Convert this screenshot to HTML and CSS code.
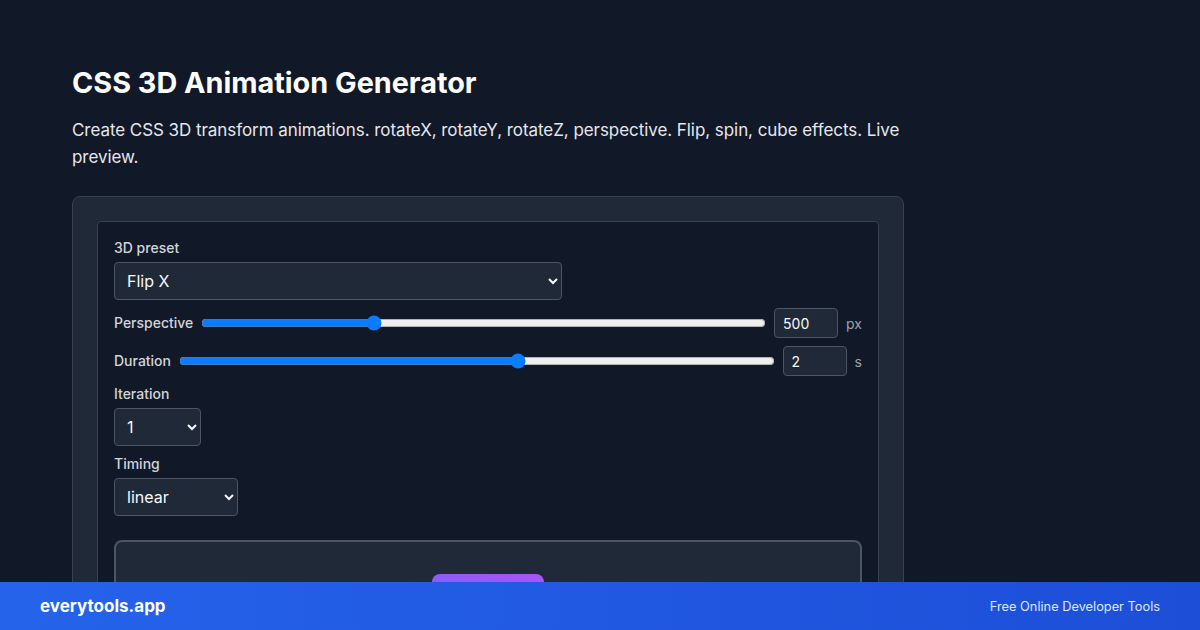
FILE: index.html
```html
<!DOCTYPE html>
<html lang="en">
<head>
<meta charset="utf-8">
<title>CSS 3D Animation Generator</title>
<link rel="stylesheet" href="styles.css">
</head>
<body>
<main class="page">
  <h1 class="title">CSS 3D Animation Generator</h1>
  <p class="lead">Create CSS 3D transform animations. rotateX, rotateY, rotateZ, perspective. Flip, spin, cube effects. Live preview.</p>
  <section class="card">
    <div class="panel">
      <label class="label">3D preset</label>
      <select class="select select-wide">
        <option>Flip X</option>
      </select>
      <div class="row">
        <span class="row-label">Perspective</span>
        <input class="range" type="range" min="200" max="1200" value="500">
        <input class="num" type="text" value="500">
        <span class="unit">px</span>
      </div>
      <div class="row">
        <span class="row-label">Duration</span>
        <input class="range" type="range" min="0" max="3.5" step="0.1" value="2">
        <input class="num" type="text" value="2">
        <span class="unit">s</span>
      </div>
      <label class="label label-gap">Iteration</label>
      <select class="select select-iter">
        <option>1</option>
      </select>
      <label class="label label-gap">Timing</label>
      <select class="select select-timing">
        <option>linear</option>
      </select>
      <div class="preview">
        <div class="box"></div>
      </div>
    </div>
  </section>
</main>
<footer class="footer">
  <span class="brand">everytools.app</span>
  <span class="tagline">Free Online Developer Tools</span>
</footer>
</body>
</html>
```

FILE: styles.css
```css
* { box-sizing: border-box; }
html, body { margin: 0; padding: 0; }
body {
  background: #111827;
  color: #f9fafb;
  font-family: Inter, "Noto Sans", "Liberation Sans", sans-serif;
  height: 630px;
  overflow: hidden;
}
.page {
  width: 832px;
  margin-left: 72px;
  padding-top: 65px;
}
.title {
  margin: 0;
  font-size: 28.8px;
  line-height: 36px;
  font-weight: 700;
  color: #ffffff;
}
.lead {
  margin: 16px 0 25px;
  font-size: 17px;
  line-height: 27px;
  letter-spacing: -0.06px;
  color: #e5e7eb;
}
.card {
  background: #1f2937;
  border: 1px solid #374151;
  border-radius: 8px;
  padding: 24px;
}
.panel {
  background: #111827;
  border: 1px solid #374151;
  border-radius: 4px;
  padding: 16px 16px 24px;
  display: flex;
  flex-direction: column;
  align-items: flex-start;
}
.label {
  font-size: 14px;
  line-height: 20px;
  font-weight: 500;
  color: #d1d5db;
  margin-bottom: 4px;
}
.label-gap { margin-top: 8px; }
.select {
  height: 38px;
  background: #1f2937;
  color: #f9fafb;
  border: 1px solid #4b5563;
  border-radius: 4px;
  font-family: inherit;
  font-size: 16px;
  padding: 0 8px;
  color-scheme: dark;
}
.select-wide { width: 448px; }
.select-iter { width: 87px; }
.select-timing { width: 124px; }
.row {
  display: flex;
  align-items: center;
  gap: 8px;
  width: 100%;
  margin-top: 8px;
}
.row-label {
  font-size: 14px;
  line-height: 20px;
  font-weight: 500;
  color: #d1d5db;
}
.range {
  flex: 1;
  margin: 0;
  accent-color: #0a7cff;
}
.num {
  width: 64px;
  height: 30px;
  background: #1f2937;
  color: #f9fafb;
  border: 1px solid #4b5563;
  border-radius: 4px;
  font-family: inherit;
  font-size: 14px;
  padding: 0 8px;
}
.unit {
  font-size: 14px;
  color: #9ca3af;
}
.preview {
  margin-top: 24px;
  width: 100%;
  height: 200px;
  background: #1f2937;
  border: 2px solid #4b5563;
  border-radius: 8px;
  padding-top: 32px;
  display: flex;
  justify-content: center;
  align-items: flex-start;
}
.box {
  width: 112px;
  height: 112px;
  border-radius: 8px;
  background: linear-gradient(90deg, #8b5cf6, #a855f7);
}
.footer {
  position: fixed;
  left: 0;
  right: 0;
  bottom: 0;
  height: 48px;
  padding: 0 40px;
  display: flex;
  align-items: center;
  justify-content: space-between;
  background: linear-gradient(90deg, #2563eb, #1d4ed8);
}
.brand {
  font-size: 17px;
  font-weight: 700;
  color: #ffffff;
}
.tagline {
  font-size: 12.8px;
  color: #dbeafe;
}
```
